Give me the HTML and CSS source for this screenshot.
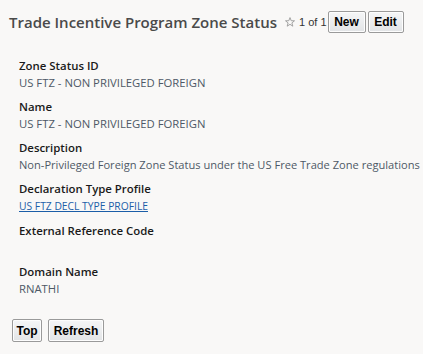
FILE: index.html
```html
<!DOCTYPE html>
<html>
<head>
<meta charset="utf-8">
<link rel="stylesheet" href="styles.css">
</head>
<body>
<div class="page">
  <div class="header">
    <h1 class="title">Trade Incentive Program Zone Status</h1>
    <div class="nav">
      <svg class="star" width="10" height="10" viewBox="0 0 10 10"><path d="M5 0.6 L6.2 3.7 L9.5 3.8 L6.9 5.9 L7.8 9.2 L5 7.3 L2.2 9.2 L3.1 5.9 L0.5 3.8 L3.8 3.7 Z" fill="none" stroke="#9a9a9a" stroke-width="0.9" stroke-linejoin="round"/></svg>
      <span class="count">1 of 1</span>
      <button class="btn btn-new">New</button>
      <button class="btn btn-edit">Edit</button>
    </div>
  </div>
  <div class="fields">
    <div class="field">
      <div class="label">Zone Status ID</div>
      <div class="value">US FTZ - NON PRIVILEGED FOREIGN</div>
    </div>
    <div class="field">
      <div class="label">Name</div>
      <div class="value">US FTZ - NON PRIVILEGED FOREIGN</div>
    </div>
    <div class="field">
      <div class="label">Description</div>
      <div class="value value-long">Non-Privileged Foreign Zone Status under the US Free Trade Zone regulations</div>
    </div>
    <div class="field">
      <div class="label">Declaration Type Profile</div>
      <div class="value"><a class="link" href="#">US FTZ DECL TYPE PROFILE</a></div>
    </div>
    <div class="field">
      <div class="label">External Reference Code</div>
      <div class="value">&nbsp;</div>
    </div>
    <div class="field">
      <div class="label">Domain Name</div>
      <div class="value">RNATHI</div>
    </div>
  </div>
  <div class="footer">
    <button class="btn btn-top">Top</button>
    <button class="btn btn-refresh">Refresh</button>
  </div>
</div>
</body>
</html>
```
FILE: styles.css
```css
html, body {
  margin: 0;
  padding: 0;
  background: #f9f8f7;
}
.page {
  font-family: "Open Sans", "Noto Sans", sans-serif;
  color: #333;
  height: 354px;
  overflow: hidden;
}
.header {
  display: flex;
  align-items: center;
  padding: 11px 0 0 9px;
  height: 22px;
  white-space: nowrap;
}
.title {
  margin: 0;
  font-size: 15px;
  font-weight: 600;
  color: #4a4a4a;
  white-space: nowrap;
}
.nav {
  display: flex;
  align-items: center;
  margin-left: 8px;
  white-space: nowrap;
}
.star {
  display: block;
  margin-right: 4px;
}
.count {
  font-family: "Liberation Sans", Arial, sans-serif;
  font-size: 11px;
  color: #333;
  margin-right: 1px;
}
.btn {
  font-family: "Liberation Sans", Arial, sans-serif;
  font-size: 12px;
  font-weight: bold;
  color: #000;
  background: linear-gradient(#f5f6f7, #e2e4e6);
  border: 1px solid #9a9a9a;
  border-radius: 2px;
  height: 22px;
  padding: 0;
  margin: 0;
  text-align: center;
  box-shadow: inset 0 0 0 1px #fdfdfd;
}
.btn-new {
  width: 38px;
}
.btn-edit {
  width: 36px;
  margin-left: 2px;
}
.fields {
  padding: 24px 0 0 19px;
}
.field {
  margin-bottom: 7px;
}
.label {
  font-size: 11.4px;
  font-weight: 600;
  color: #1a1a1a;
  line-height: 17px;
}
.value {
  font-size: 11.3px;
  color: #4e5866;
  line-height: 17px;
  white-space: nowrap;
}
.value-long {
  font-size: 11.1px;
}
.link {
  font-size: 10.3px;
  color: #1c5ea8;
  text-decoration: underline;
}
.footer {
  display: flex;
  padding: 15px 0 0 12px;
}
.footer .btn {
  height: 23px;
}
.btn-top {
  width: 30px;
}
.btn-refresh {
  width: 56px;
  margin-left: 6px;
}
```
